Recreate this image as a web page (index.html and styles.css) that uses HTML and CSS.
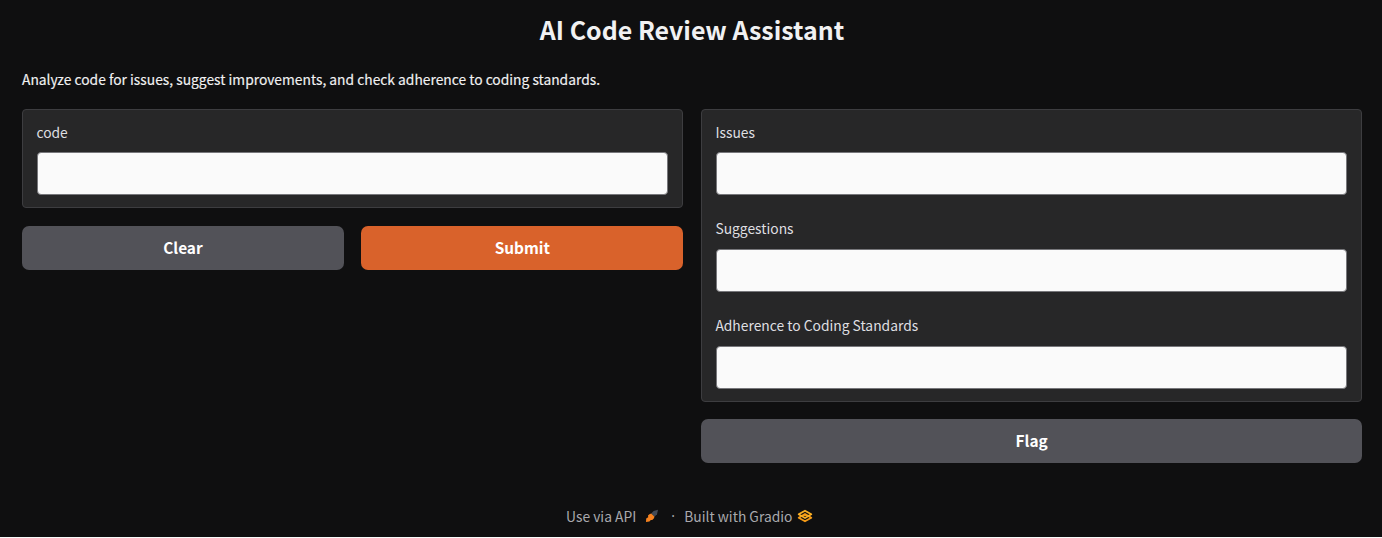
FILE: index.html
```html
<!DOCTYPE html>
<html lang="en">
<head>
<meta charset="utf-8">
<title>AI Code Review Assistant</title>
<link rel="stylesheet" href="styles.css">
</head>
<body>
<div class="app">
  <h1 class="title"><span>AI Code Review Assistant</span></h1>
  <p class="description"><span>Analyze code for issues, suggest improvements, and check adherence to coding standards.</span></p>
  <main class="columns">
    <section class="column">
      <div class="panel">
        <label class="field"><span class="label">code</span><input class="input" type="text"></label>
      </div>
      <div class="actions">
        <button class="button">Clear</button>
        <button class="button primary">Submit</button>
      </div>
    </section>
    <section class="column">
      <div class="panel">
        <label class="field"><span class="label">Issues</span><input class="input" type="text"></label>
        <label class="field"><span class="label">Suggestions</span><input class="input" type="text"></label>
        <label class="field"><span class="label">Adherence to Coding Standards</span><input class="input" type="text"></label>
      </div>
      <div class="actions">
        <button class="button flag">Flag</button>
      </div>
    </section>
  </main>
  <footer class="footer">
    <span class="api">Use via API</span>
    <svg class="rocket" viewBox="0 0 14 14">
      <path d="M6.200 4.600 8.600 2 13 .8 12 5.200 9.400 7.800Z" fill="#434a56"/>
      <path d="M4.400 5.300 6.200 4.500 9.500 7.700 8.800 9.600 7.200 11 5.800 10.900 4.400 12.600 1 13 1.200 9.600 3.200 8.200 3 6.600Z" fill="#f58220"/>
    </svg>
    <span class="dot">·</span>
    <span class="built">Built with Gradio</span>
    <svg class="logo" viewBox="0 0 16 14">
      <g fill="none" stroke-linejoin="round" stroke-width="1.800">
        <path d="M8 5 14.300 8.700 8 12.300 1.700 8.700Z" stroke="#f59a16"/>
        <path d="M8 1.700 14.300 5.300 8 9 1.700 5.300Z" stroke="#fbb024"/>
      </g>
    </svg>
  </footer>
</div>
</body>
</html>
```
FILE: styles.css
```css
* { box-sizing: border-box; }
body {
  margin: 0;
  background: #fafafa;
  font-family: "Noto Sans CJK SC", "Noto Sans", sans-serif;
  color: #f1f1f2;
}
.app {
  height: 537px;
  padding: 0 20px 0 22px;
  background: #0f0f10;
  display: flex;
  flex-direction: column;
  overflow: hidden;
}
.title {
  margin: 9px 0 0;
  height: 40px;
  line-height: 40px;
  font-size: 24.95px;
  font-weight: 700;
  text-align: center;
}
.description {
  margin: 20px 0 0;
  height: 20px;
  line-height: 20px;
  font-size: 13.82px;
  -webkit-text-stroke: 0.15px currentColor;
}
.columns {
  margin-top: 20.4px;
  display: grid;
  grid-template-columns: 661.3px 661.3px;
  gap: 17.7px;
  align-items: start;
}
.column { display: grid; gap: 17.3px; }
.panel {
  border: 1px solid #3d3d40;
  border-radius: 4px;
  background: #272728;
  padding: 11.3px 14px 12px;
  display: grid;
  gap: 23px;
}
.field { display: block; }
.label {
  display: block;
  height: 20px;
  line-height: 20px;
  margin: 0 0 10.7px -0.6px;
  font-size: 13.83px;
  color: #dfdfe1;
}
.input {
  display: block;
  width: 100%;
  height: 43px;
  padding: 0 12px;
  border: 1px solid #77777b;
  border-radius: 4px;
  background: #fafafa;
}
.actions { display: flex; gap: 17.5px; }
.button {
  flex: 1;
  height: 44px;
  padding: 0 0 1px;
  border: 0;
  border-radius: 7px;
  background: #525258;
  color: #fff;
  font: 700 15.4px/42px "Noto Sans CJK SC", "Noto Sans", sans-serif;
}
.primary { background: #d9622b; }
.flag { padding-bottom: 2px; }
.footer {
  margin-top: 42px;
  height: 22px;
  display: flex;
  align-items: center;
  padding-left: 544px;
  font-size: 13.83px;
  line-height: 22px;
  white-space: nowrap;
  color: #a9a9ad;
}
.rocket { width: 14px; height: 14px; margin-left: 9px; }
.dot { width: 4px; margin: 0 9px 0 12px; font-family: "Noto Sans", sans-serif; }
.logo { width: 16px; height: 14px; margin-left: 5px; }
```
